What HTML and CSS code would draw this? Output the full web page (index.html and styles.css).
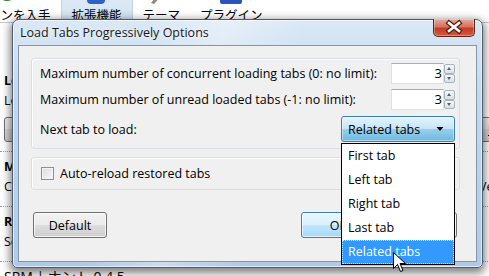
FILE: index.html
```html
<!DOCTYPE html>
<html lang="ja">
<head>
    <meta charset="UTF-8">
    <title>Load Tabs Progressively Options</title>
    <link rel="stylesheet" href="styles.css">
</head>
<body>
    <!-- 背後のアドオンマネージャ -->
    <div class="page">
        <div class="toolbar">
            <div class="tb_item tb_first">
                <svg width="24" height="24" viewBox="0 0 24 24"><circle cx="12" cy="10" r="10" fill="#3b7d2f"/></svg>
                <span>アドオンを入手</span>
            </div>
            <div class="tb_item tb_sel">
                <svg width="24" height="24" viewBox="0 0 24 24"><path d="M2 6h6a3 3 0 1 1 6 0h6v14a4 4 0 0 1-4 3H6a4 4 0 0 1-4-3z" fill="#2d62c4"/></svg>
                <span>拡張機能</span>
            </div>
            <div class="tb_item">
                <svg width="24" height="24" viewBox="0 0 24 24"><path d="M2 22l8-10 3 2-8 9z" fill="#8a8a7a"/><path d="M11 13l4-5 2 1-4 5z" fill="#d8b84a"/></svg>
                <span>テーマ</span>
            </div>
            <div class="tb_item">
                <svg width="24" height="24" viewBox="0 0 24 24"><rect x="1" y="2" width="22" height="21" rx="2" fill="#2956b8"/></svg>
                <span>プラグイン</span>
            </div>
        </div>
        <div class="list">
            <div class="entry">
                <div class="row"><b>Load Tabs Progressively 0.5</b><span></span></div>
                <div class="row"><span>Load tabs progressively to save memory</span><span></span></div>
                <div class="row"><span><button class="pbtn">Options</button></span><span><button class="pbtn"><u>U</u>ninstall</button></span></div>
            </div>
            <div class="entry">
                <div class="row"><b>Menu Editor 1.2.6</b><span></span></div>
                <div class="row"><span>Customize application menus</span><span>Version</span></div>
            </div>
            <div class="entry">
                <div class="row"><b>RSS Ticker 2.0</b><span></span></div>
                <div class="row"><span>Scrolls RSS feeds in the status bar</span><span></span></div>
            </div>
            <div class="entry">
                <div class="row"><span class="big">SRM | ホント 0.4.5</span><span></span></div>
            </div>
        </div>
    </div>

    <!-- ダイアログ -->
    <div class="dialog">
        <div class="titlebar">
            <span class="title">Load Tabs Progressively Options</span>
            <div class="close">
                <svg width="42" height="18" viewBox="0 0 42 18">
                    <path d="M16 5l10 8M26 5l-10 8" stroke="#5a1c12" stroke-width="5" stroke-linecap="square"/>
                    <path d="M16 5l10 8M26 5l-10 8" stroke="#fff" stroke-width="2.6" stroke-linecap="square"/>
                </svg>
            </div>
        </div>
        <div class="client">
            <div class="group g1">
                <div class="frow">
                    <span>Maximum number of concurrent loading tabs (0: no limit):</span>
                    <div class="spin">
                        <div class="spin_box">3</div>
                        <div class="spin_btns"><span class="sb up"></span><span class="sb down"></span></div>
                    </div>
                </div>
                <div class="frow">
                    <span>Maximum number of unread loaded tabs (-1: no limit):</span>
                    <div class="spin">
                        <div class="spin_box">3</div>
                        <div class="spin_btns"><span class="sb up"></span><span class="sb down"></span></div>
                    </div>
                </div>
                <div class="frow sel_row">
                    <span>Next tab to load:</span>
                    <div class="select">
                        <span>Related tabs</span>
                        <svg width="8" height="5" viewBox="0 0 8 5"><path d="M0.5 0h7L4 4z" fill="#000"/></svg>
                    </div>
                </div>
            </div>
            <div class="group g2">
                <span class="checkbox"></span>
                <span>Auto-reload restored tabs</span>
            </div>
            <div class="buttons">
                <button class="btn">Default</button>
                <button class="btn btn_ok">OK</button>
                <button class="btn btn_cancel">Cancel</button>
            </div>
        </div>
    </div>

    <ul class="dropdown">
        <li>First tab</li>
        <li>Left tab</li>
        <li>Right tab</li>
        <li>Last tab</li>
        <li class="on">Related tabs</li>
    </ul>

    <svg class="cursor" width="13" height="21" viewBox="0 0 13 21">
        <path d="M0.5 0.5v16l4-4 3 7 2.5-1-3-7h5.5z" fill="#fff" stroke="#000" stroke-width="1"/>
    </svg>
</body>
</html>
```

FILE: styles.css
```css
* {
    margin: 0;
    padding: 0;
    box-sizing: border-box;
}

body {
    width: 489px;
    height: 276px;
    overflow: hidden;
    position: relative;
    background: #fff;
    font-family: "Open Sans", "Noto Sans CJK JP", sans-serif;
    font-size: 12.5px;
    color: #000;
}

/* ---- 背後のページ ---- */
.page {
    width: 560px;
}

.toolbar {
    display: flex;
    margin-top: -19px;
    height: 42px;
    border-bottom: 1px solid #c9c9c9;
}

.tb_item {
    display: flex;
    flex-direction: column;
    align-items: center;
    padding: 0 10px;
    font-family: "Noto Sans CJK JP", sans-serif;
    font-size: 12.5px;
}

.tb_item svg {
    display: block;
    flex: none;
}

.tb_item span {
    line-height: 17px;
    margin-top: 1px;
}

.tb_first {
    margin-left: -47px;
}

.tb_sel {
    background: linear-gradient(#e4eef8, #d3e2f1);
    border-left: 1px solid #c2d3e6;
    border-right: 1px solid #c2d3e6;
}

.list {
    padding-top: 43px;
}

.entry {
    padding: 5px 0 9px 4px;
    border-bottom: 1px dotted #9a9a9a;
}

.row {
    display: grid;
    grid-template-columns: 475px 1fr;
    line-height: 20px;
    white-space: nowrap;
}

.row .big {
    font-size: 14px;
}

.pbtn {
    margin-top: 6px;
    height: 25px;
    padding: 0 8px;
    font: inherit;
    border: 1px solid #707070;
    border-radius: 3px;
    background: linear-gradient(#f3f3f3, #e6e6e6 50%, #d8d8d8 50%, #cfcfcf);
}

/* ---- ダイアログ ---- */
.dialog {
    position: absolute;
    left: 12px;
    top: 19px;
    width: 471px;
    height: 249px;
    border: 1px solid #4f5d6d;
    border-radius: 7px 7px 5px 5px;
    padding: 0 5px 5px 5px;
    display: flex;
    flex-direction: column;
    background:
        linear-gradient(105deg, rgba(255,255,255,0) 25%, rgba(255,255,255,.35) 40%, rgba(255,255,255,0) 55%),
        linear-gradient(#dae8f6, #c3d8ee 30%, #aecae8);
    box-shadow: 0 3px 9px 2px rgba(0,0,0,.5), inset 0 0 0 1px rgba(255,255,255,.6);
}

.titlebar {
    height: 25px;
    display: flex;
    align-items: flex-start;
}

.title {
    line-height: 25px;
    padding-left: 2px;
    color: #1a1a1a;
    text-shadow: 0 0 6px #fff;
}

.close {
    margin-left: auto;
    margin-top: -1px;
    margin-right: 2px;
    width: 42px;
    height: 18px;
    border: 1px solid #5b261d;
    border-top: 0;
    border-radius: 0 0 5px 5px;
    background: linear-gradient(#e9a898, #d7735f 45%, #c43c24 55%, #cf5a40);
    box-shadow: inset 0 0 0 1px rgba(255,255,255,.3);
}

.close svg {
    display: block;
    margin: -1px 0 0 -1px;
}

.client {
    flex: 1;
    background: #f0f0f0;
    border: 1px solid #8296ad;
    padding: 12px 16px 0 12px;
}

.group {
    border: 1px solid #d5dfe5;
    border-radius: 3px;
    box-shadow: inset 1px 1px 0 #fff;
}

.g1 {
    padding: 4px 4px 6px 8px;
    display: flex;
    flex-direction: column;
    gap: 5px;
}

.frow {
    height: 21px;
    display: flex;
    align-items: center;
    justify-content: space-between;
}

.sel_row {
    height: 26px;
    margin-top: 1px;
}

.spin {
    display: flex;
    height: 21px;
}

.spin_box {
    width: 53px;
    height: 21px;
    background: #fff;
    border: 1px solid #dbdfe6;
    border-top-color: #abadb3;
    text-align: right;
    padding-right: 1px;
    line-height: 19px;
    font-size: 13px;
}

.spin_btns {
    width: 11px;
    display: flex;
    flex-direction: column;
    padding: 1px 0;
}

.sb {
    flex: 1;
    position: relative;
    border: 1px solid #a7b3c1;
    border-radius: 2px;
    background: linear-gradient(#f7f7f7, #dcdfe3);
}

.sb::after {
    content: "";
    position: absolute;
    left: 2px;
    top: 2px;
    border-left: 2.5px solid transparent;
    border-right: 2.5px solid transparent;
}

.up::after {
    border-bottom: 3px solid #555f6b;
}

.down::after {
    border-top: 3px solid #555f6b;
}

.select {
    width: 114px;
    height: 26px;
    border: 1px solid #3c7fb1;
    border-radius: 3px;
    background: linear-gradient(#e5f4fc, #c4e5f6 50%, #98d1ef 50%, #6db8e0);
    box-shadow: inset 0 0 0 1px rgba(255,255,255,.45);
    display: flex;
    align-items: center;
    justify-content: space-between;
    padding: 0 10px 0 6px;
}

.select svg {
    display: block;
}

.g2 {
    margin-top: 8px;
    height: 33px;
    display: flex;
    align-items: center;
    padding-left: 9px;
    gap: 6px;
}

.checkbox {
    width: 13px;
    height: 13px;
    border: 1px solid #8e8f8f;
    background: linear-gradient(135deg, #dcdcdc, #f8f8f8);
    box-shadow: inset 0 0 0 1px #f4f4f4;
}

.buttons {
    margin-top: 22px;
    display: flex;
    padding: 0 3px 0 2px;
}

.btn {
    width: 74px;
    height: 26px;
    font: inherit;
    color: #000;
    border: 1px solid #707070;
    border-radius: 3px;
    background: linear-gradient(#f2f2f2, #ebebeb 50%, #dddddd 50%, #cfcfcf);
    box-shadow: inset 0 0 0 1px rgba(255,255,255,.7);
}

.btn_ok {
    width: 75px;
    margin-left: auto;
    border-color: #3c7fb1;
    background: linear-gradient(#eaf6fd, #d9f0fc 50%, #bee6fd 50%, #a7d9f5);
}

.btn_cancel {
    width: 75px;
    margin-left: 6px;
}

/* ---- ドロップダウン ---- */
.dropdown {
    position: absolute;
    left: 341px;
    top: 143px;
    width: 114px;
    height: 122px;
    list-style: none;
    background: #fff;
    border: 1px solid #000;
}

.dropdown li {
    height: 24px;
    line-height: 24px;
    padding-left: 6px;
}

.dropdown li.on {
    background: #3399ff;
    color: #fff;
    outline: 1px dotted #cfe6ff;
    outline-offset: -1px;
}

.cursor {
    position: absolute;
    left: 393px;
    top: 252px;
}
```
